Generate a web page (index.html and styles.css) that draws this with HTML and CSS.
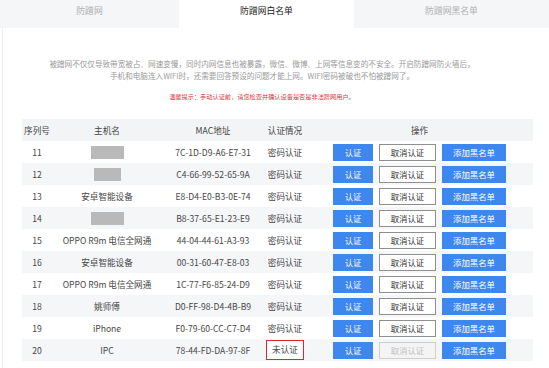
FILE: index.html
```html
<!DOCTYPE html>
<html lang="zh">
<head>
<meta charset="utf-8">
<link rel="stylesheet" href="styles.css">
</head>
<body>
<div class="tabs">
  <div class="tab">防蹭网</div>
  <div class="tab active">防蹭网白名单</div>
  <div class="tab">防蹭网黑名单</div>
</div>
<div class="panel">
  <p class="desc">被蹭网不仅仅导致带宽被占、网速变慢，同时内网信息也被暴露，微信、微博、上网等信息变的不安全。开启防蹭网防火墙后，<br>手机和电脑连入WIFI时，还需要回答预设的问题才能上网。WIFI密码被破也不怕被蹭网了。</p>
  <p class="tip">温馨提示：手动认证前，请您检查并确认设备是否是非法蹭网用户。</p>
  <table class="list">
    <colgroup><col class="c1"><col class="c2"><col class="c3"><col class="c4"><col class="c5"></colgroup>
    <thead>
      <tr><th>序列号</th><th>主机名</th><th>MAC地址</th><th>认证情况</th><th>操作</th></tr>
    </thead>
    <tbody>
      <tr><td>11</td><td><span class="mask w33"></span></td><td>7C-1D-D9-A6-E7-31</td><td>密码认证</td><td><div class="ops"><button class="btn blue b1">认证</button><button class="btn line b2">取消认证</button><button class="btn blue b3">添加黑名单</button></div></td></tr>
      <tr><td>12</td><td><span class="mask w27"></span></td><td>C4-66-99-52-65-9A</td><td>密码认证</td><td><div class="ops"><button class="btn blue b1">认证</button><button class="btn line b2">取消认证</button><button class="btn blue b3">添加黑名单</button></div></td></tr>
      <tr><td>13</td><td>安卓智能设备</td><td>E8-D4-E0-B3-0E-74</td><td>密码认证</td><td><div class="ops"><button class="btn blue b1">认证</button><button class="btn line b2">取消认证</button><button class="btn blue b3">添加黑名单</button></div></td></tr>
      <tr><td>14</td><td><span class="mask w33"></span></td><td>B8-37-65-E1-23-E9</td><td>密码认证</td><td><div class="ops"><button class="btn blue b1">认证</button><button class="btn line b2">取消认证</button><button class="btn blue b3">添加黑名单</button></div></td></tr>
      <tr><td>15</td><td>OPPO R9m 电信全网通</td><td>44-04-44-61-A3-93</td><td>密码认证</td><td><div class="ops"><button class="btn blue b1">认证</button><button class="btn line b2">取消认证</button><button class="btn blue b3">添加黑名单</button></div></td></tr>
      <tr><td>16</td><td>安卓智能设备</td><td>00-31-60-47-E8-03</td><td>密码认证</td><td><div class="ops"><button class="btn blue b1">认证</button><button class="btn line b2">取消认证</button><button class="btn blue b3">添加黑名单</button></div></td></tr>
      <tr><td>17</td><td>OPPO R9m 电信全网通</td><td>1C-77-F6-85-24-D9</td><td>密码认证</td><td><div class="ops"><button class="btn blue b1">认证</button><button class="btn line b2">取消认证</button><button class="btn blue b3">添加黑名单</button></div></td></tr>
      <tr><td>18</td><td>姚师傅</td><td>D0-FF-98-D4-4B-B9</td><td>密码认证</td><td><div class="ops"><button class="btn blue b1">认证</button><button class="btn line b2">取消认证</button><button class="btn blue b3">添加黑名单</button></div></td></tr>
      <tr><td>19</td><td>iPhone</td><td>F0-79-60-CC-C7-D4</td><td>密码认证</td><td><div class="ops"><button class="btn blue b1">认证</button><button class="btn line b2">取消认证</button><button class="btn blue b3">添加黑名单</button></div></td></tr>
      <tr><td>20</td><td>IPC</td><td>78-44-FD-DA-97-8F</td><td><span class="flag">未认证</span></td><td><div class="ops"><button class="btn blue b1">认证</button><button class="btn off b2">取消认证</button><button class="btn blue b3">添加黑名单</button></div></td></tr>
    </tbody>
  </table>
</div>
</body>
</html>
```

FILE: styles.css
```css
html, body {
  margin: 0;
  padding: 0;
  background: #ffffff;
  font-family: "Noto Sans CJK SC", "Noto Sans", sans-serif;
  color: #333333;
}
.tabs {
  display: flex;
  height: 28px;
}
.tab {
  flex: 0 0 179px;
  display: flex;
  align-items: center;
  justify-content: center;
  padding-bottom: 8px;
  box-sizing: border-box;
  background: #f5f6f8;
  color: #b0b0b0;
  font-size: 8.8px;
}
.tab.active {
  flex-basis: 175px;
  background: #ffffff;
  color: #222222;
}
.tab:last-child {
  flex: 1 1 auto;
}
.panel {
  margin-left: 2px;
  border-left: 1px solid #ececec;
  padding: 30px 0 0 19px;
  height: 340px;
  box-sizing: border-box;
}
.desc {
  margin: 0;
  width: 480px;
  text-align: center;
  font-size: 7.6px;
  line-height: 12px;
  color: #9a9a9a;
}
.tip {
  margin: 10px 0 0 0;
  width: 480px;
  text-align: center;
  font-size: 6.2px;
  line-height: 10px;
  color: #d9383a;
}
.list {
  margin-top: 17px;
  width: 511px;
  border-collapse: collapse;
  table-layout: fixed;
  font-size: 8.6px;
}
.c1 { width: 30px; }
.c2 { width: 110px; }
.c3 { width: 102px; }
.c4 { width: 42px; }
.c5 { width: 227px; }
.list th {
  height: 22px;
  padding: 0;
  background: #f3f4f6;
  font-weight: normal;
  color: #444444;
  text-align: center;
}
.list td {
  height: 22px;
  padding: 0;
  text-align: center;
  color: #484848;
  white-space: nowrap;
}
.list tbody tr:nth-child(even) {
  background: #f5f6f8;
}
.mask {
  display: inline-block;
  height: 13px;
  vertical-align: middle;
  background: #b9b9b9;
}
.w33 { width: 33px; }
.w27 { width: 27px; }
.ops {
  display: flex;
  justify-content: center;
  gap: 6px;
}
.btn {
  height: 17px;
  padding: 0;
  border: 1px solid transparent;
  font-family: inherit;
  font-size: 8.4px;
  line-height: 15px;
  box-sizing: border-box;
}
.b1 { width: 40px; }
.b2 { width: 57px; }
.b3 { width: 64px; }
.blue {
  background: #3d87ee;
  border-color: #3d87ee;
  color: #ffffff;
}
.line {
  background: #ffffff;
  border-color: #8f8f8f;
  color: #333333;
}
.off {
  background: #f4f4f4;
  border-color: #cfcfcf;
  color: #c0c0c0;
}
.flag {
  display: inline-block;
  width: 38px;
  height: 20px;
  line-height: 17px;
  box-sizing: border-box;
  border: 1.5px solid #e0262a;
  background: #ffffff;
  vertical-align: middle;
}
```
